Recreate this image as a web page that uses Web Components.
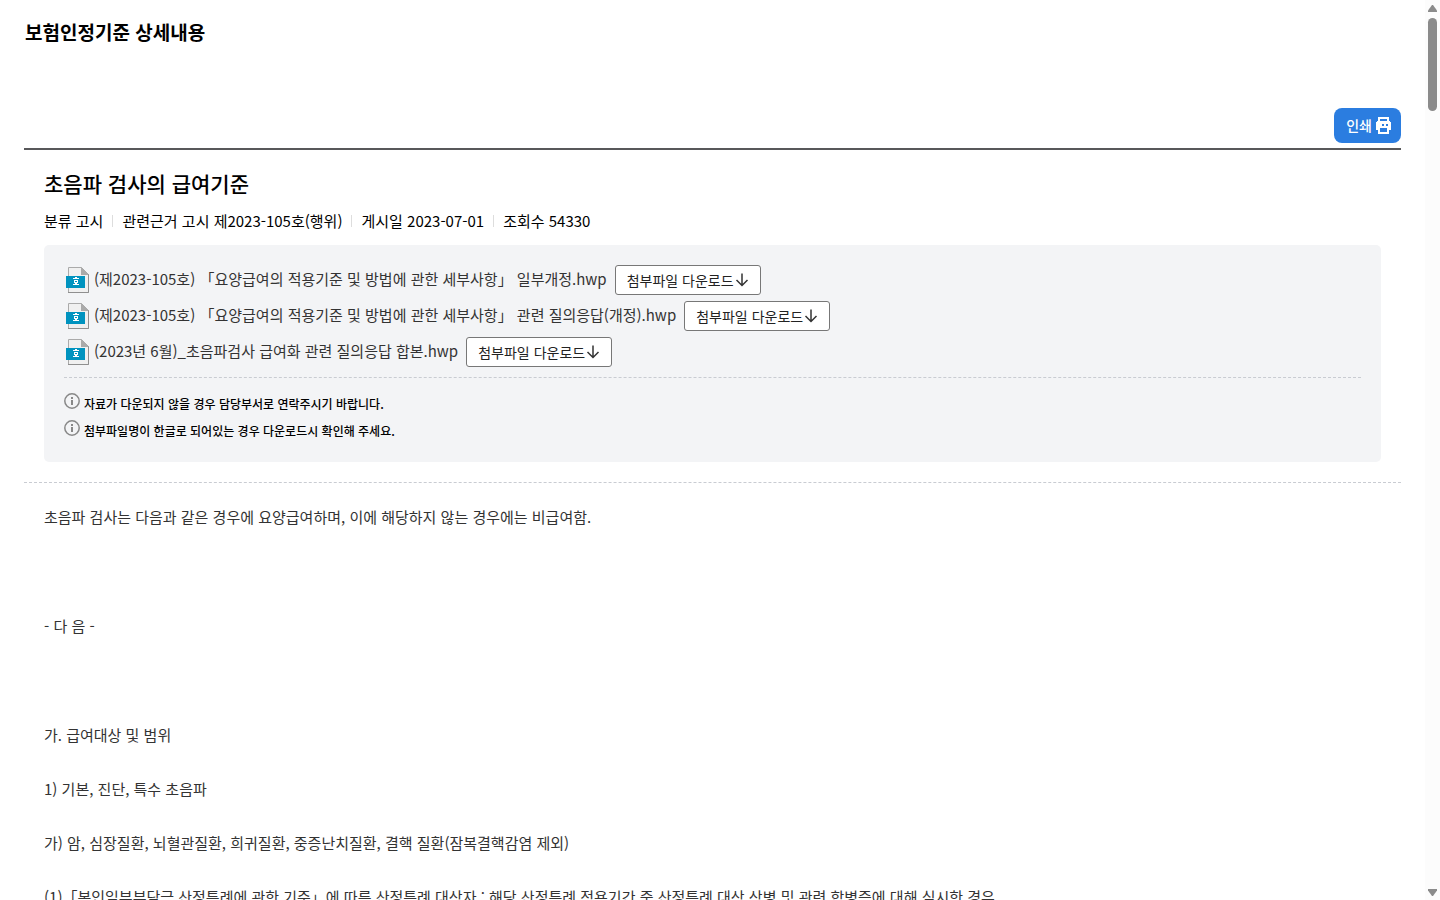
<!DOCTYPE html>
<html lang="ko">
<head>
<meta charset="utf-8">
<meta name="viewport" content="width=device-width, initial-scale=1">
<title>보험인정기준 상세내용</title>
<style>
    body {
        margin: 0;
        background: #fff;
        color: #333;
        font-family: "Noto Sans CJK KR", "Noto Sans", sans-serif;
        font-size: 15px;
        line-height: 27px;
    }
</style>
</head>
<body>
<criteria-page>
    <page-header slot="header">보험인정기준 상세내용</page-header>
    <print-button slot="tools">인쇄</print-button>

    <article-head slot="article" heading="초음파 검사의 급여기준">
        <meta-item label="분류">고시</meta-item>
        <meta-item label="관련근거">고시 제2023-105호(행위)</meta-item>
        <meta-item label="게시일">2023-07-01</meta-item>
        <meta-item label="조회수">54330</meta-item>
    </article-head>

    <attachment-box slot="article">
        <attachment-item>(제2023-105호) 「요양급여의 적용기준 및 방법에 관한 세부사항」 일부개정.hwp</attachment-item>
        <attachment-item>(제2023-105호) 「요양급여의 적용기준 및 방법에 관한 세부사항」 관련 질의응답(개정).hwp</attachment-item>
        <attachment-item>(2023년 6월)_초음파검사 급여화 관련 질의응답 합본.hwp</attachment-item>
        <info-note slot="notes">자료가 다운되지 않을 경우 담당부서로 연락주시기 바랍니다.</info-note>
        <info-note slot="notes">첨부파일명이 한글로 되어있는 경우 다운로드시 확인해 주세요.</info-note>
    </attachment-box>

    <article-body slot="article">
        <p>초음파 검사는 다음과 같은 경우에 요양급여하며, 이에 해당하지 않는 경우에는 비급여함.</p>
        <p class="blank"></p>
        <p>- 다 음 -</p>
        <p class="blank"></p>
        <p>가. 급여대상 및 범위</p>
        <p>1) 기본, 진단, 특수 초음파</p>
        <p>가) 암, 심장질환, 뇌혈관질환, 희귀질환, 중증난치질환, 결핵 질환(잠복결핵감염 제외)</p>
        <p>(1)「본인일부부담금 산정특례에 관한 기준」에 따른 산정특례 대상자 : 해당 산정특례 적용기간 중 산정특례 대상 상병 및 관련 합병증에 대해 실시한 경우</p>
    </article-body>
</criteria-page>

<script>
    class CriteriaPage extends HTMLElement {
        constructor() {
            super();
            this.attachShadow({ mode: 'open' });
            this.shadowRoot.innerHTML = `
                <style>
                    :host {
                        display: grid;
                        grid-template-columns: minmax(0, 1fr) 15px;
                        height: 100vh;
                    }
                    .view {
                        overflow-y: auto;
                        scrollbar-width: none;
                        padding: 0 24px;
                    }
                    .tools {
                        display: flex;
                        justify-content: flex-end;
                        margin-top: 44px;
                        padding-bottom: 5px;
                        border-bottom: 2px solid #58585a;
                    }
                </style>
                <main class="view">
                    <slot name="header"></slot>
                    <div class="tools"><slot name="tools"></slot></div>
                    <slot name="article"></slot>
                </main>
                <scroll-rail></scroll-rail>
            `;
        }
    }

    class PageHeader extends HTMLElement {
        constructor() {
            super();
            this.attachShadow({ mode: 'open' });
            this.shadowRoot.innerHTML = `
                <style>
                    :host { display: flex; align-items: center; height: 64px; }
                    h1 {
                        margin: 0;
                        padding-left: 1px;
                        color: #000;
                        font-size: 19px;
                        font-weight: 700;
                        line-height: 30px;
                    }
                </style>
                <h1><slot></slot></h1>
            `;
        }
    }

    class PrintButton extends HTMLElement {
        constructor() {
            super();
            this.attachShadow({ mode: 'open' });
            this.shadowRoot.innerHTML = `
                <style>
                    :host { display: block; }
                    button {
                        display: flex;
                        align-items: center;
                        gap: 4px;
                        height: 35px;
                        padding: 0 10px 1px 12px;
                        border: 0;
                        border-radius: 8px;
                        background: #2b7de0;
                        color: #fff;
                        font: inherit;
                        font-size: 14px;
                        font-weight: 500;
                        cursor: pointer;
                    }
                    svg { display: block; }
                </style>
                <button type="button">
                    <slot></slot>
                    <svg width="15" height="17" viewBox="0 0 15 17" aria-hidden="true" shape-rendering="crispEdges">
                        <path fill="#fff" fill-rule="evenodd" d="M2 0h11v4h1v1h1v8h-2v4H2v-4H0V5h1V4h1zM4 2v2h7V2zM4 11v4h7v-4zM6 7v2h2V7zM10 7v2h2V7z"/>
                    </svg>
                </button>
            `;
            this.shadowRoot.querySelector('button').addEventListener('click', () => window.print());
        }
    }

    class ArticleHead extends HTMLElement {
        constructor() {
            super();
            this.attachShadow({ mode: 'open' });
        }

        connectedCallback() {
            this.shadowRoot.innerHTML = `
                <style>
                    :host { display: block; padding: 18px 20px 0; color: #000; }
                    h2 {
                        margin: 0;
                        font-size: 21px;
                        font-weight: 500;
                        line-height: 30px;
                    }
                    .meta {
                        display: flex;
                        flex-wrap: wrap;
                        margin-top: 9px;
                    }
                </style>
                <h2>${this.getAttribute('heading') || ''}</h2>
                <div class="meta"><slot></slot></div>
            `;
        }
    }

    class MetaItem extends HTMLElement {
        constructor() {
            super();
            this.attachShadow({ mode: 'open' });
        }

        connectedCallback() {
            this.shadowRoot.innerHTML = `
                <style>
                    :host { display: flex; align-items: center; }
                    :host(:not(:first-child))::before {
                        content: "";
                        width: 1px;
                        height: 12px;
                        margin: 0 9px;
                        background: #ddd;
                    }
                </style>
                <span>${this.getAttribute('label') || ''} <slot></slot></span>
            `;
        }
    }

    class AttachmentBox extends HTMLElement {
        constructor() {
            super();
            this.attachShadow({ mode: 'open' });
            this.shadowRoot.innerHTML = `
                <style>
                    :host {
                        display: block;
                        margin: 11px 20px 20px;
                        padding: 20px 20px 18px;
                        border-radius: 5px;
                        background: #f3f4f6;
                    }
                    .files {
                        display: grid;
                        gap: 6px;
                        padding-bottom: 10px;
                        border-bottom: 1px dashed #c9ccd2;
                    }
                    .notes { padding-top: 12px; }
                </style>
                <div class="files"><slot></slot></div>
                <div class="notes"><slot name="notes"></slot></div>
            `;
        }
    }

    class AttachmentItem extends HTMLElement {
        constructor() {
            super();
            this.attachShadow({ mode: 'open' });
            this.shadowRoot.innerHTML = `
                <style>
                    :host { display: flex; align-items: center; }
                    svg { display: block; flex: none; }
                    a {
                        display: flex;
                        align-items: center;
                        gap: 5px;
                        padding-left: 2px;
                        color: #333;
                        text-decoration: none;
                    }
                    .name { padding-bottom: 3px; }
                    button {
                        display: flex;
                        align-items: center;
                        gap: 1px;
                        flex: none;
                        height: 30px;
                        margin-left: 8px;
                        padding: 0 11px;
                        border: 1px solid #777;
                        border-radius: 3px;
                        background: #fff;
                        color: #222;
                        font: inherit;
                        font-size: 14px;
                        cursor: pointer;
                    }
                </style>
                <a href="#">
                    <svg width="23" height="28" viewBox="0 0 23 28" aria-hidden="true">
                        <path d="M2.500 1.500H15.500L22.500 8.500V26.500H2.500Z" fill="#f0f0f0" stroke="#aaa"/>
                        <path d="M22.500 8v18.500H2" fill="none" stroke="#8f8f8f"/>
                        <path d="M15 1l8 8h-8z" fill="#aaa"/>
                        <path d="M0 10h19v12H0z" fill="#0093bf"/>
                        <g fill="#fff" shape-rendering="crispEdges">
                            <path d="M9 11h2v1H9zM7 12h6v1H7z"/>
                            <path fill-rule="evenodd" d="M8 14h4v3H8zM9 15v1h2v-1z"/>
                            <path d="M9 17h2v1H9zM7 18h6v1H7z"/>
                        </g>
                    </svg>
                    <span class="name"><slot></slot></span>
                </a>
                <button type="button">첨부파일 다운로드
                    <svg width="14" height="14" viewBox="0 0 14 14" aria-hidden="true">
                        <path d="M7 0.500v12M1.500 7L7 12.500L12.500 7" fill="none" stroke="#333" stroke-width="1.500"/>
                    </svg>
                </button>
            `;
        }
    }

    class InfoNote extends HTMLElement {
        constructor() {
            super();
            this.attachShadow({ mode: 'open' });
            this.shadowRoot.innerHTML = `
                <style>
                    :host {
                        display: flex;
                        gap: 4px;
                        color: #000;
                        font-size: 12px;
                        font-weight: 500;
                    }
                    svg { flex: none; margin-top: 3px; }
                </style>
                <svg width="16" height="16" viewBox="0 0 16 16" aria-hidden="true">
                    <circle cx="8" cy="8" r="7.200" fill="none" stroke="#888" stroke-width="1.500"/>
                    <path d="M7 4h2v2H7zM7 7h2v5H7z" fill="#888"/>
                </svg>
                <span><slot></slot></span>
            `;
        }
    }

    class ArticleBody extends HTMLElement {
        constructor() {
            super();
            this.attachShadow({ mode: 'open' });
            this.shadowRoot.innerHTML = `
                <style>
                    :host {
                        display: grid;
                        gap: 27px;
                        padding: 20px;
                        border-top: 1px dashed #c9ccd2;
                    }
                    ::slotted(p) { margin: 0; }
                    ::slotted(.blank) { height: 28px; }
                </style>
                <slot></slot>
            `;
        }
    }

    class ScrollRail extends HTMLElement {
        constructor() {
            super();
            this.attachShadow({ mode: 'open' });
            this.shadowRoot.innerHTML = `
                <style>
                    :host {
                        display: flex;
                        flex-direction: column;
                        align-items: center;
                        padding: 5px 0 4px;
                        background: #fcfcfc;
                    }
                    .thumb {
                        width: 9px;
                        height: 93px;
                        margin: 6px 0 auto;
                        border-radius: 5px;
                        background: #8b8b8b;
                    }
                    svg { display: block; }
                </style>
                <svg width="9" height="7" viewBox="0 0 9 7" aria-hidden="true"><path d="M4 0h1l4 5.500V7H0V5.500z" fill="#8b8b8b"/></svg>
                <div class="thumb"></div>
                <svg width="9" height="7" viewBox="0 0 9 7" aria-hidden="true"><path d="M4 7h1l4-5.500V0H0v1.500z" fill="#8b8b8b"/></svg>
            `;
        }
    }

    customElements.define('scroll-rail', ScrollRail);
    customElements.define('criteria-page', CriteriaPage);
    customElements.define('page-header', PageHeader);
    customElements.define('print-button', PrintButton);
    customElements.define('article-head', ArticleHead);
    customElements.define('meta-item', MetaItem);
    customElements.define('attachment-box', AttachmentBox);
    customElements.define('attachment-item', AttachmentItem);
    customElements.define('info-note', InfoNote);
    customElements.define('article-body', ArticleBody);
</script>
</body>
</html>
